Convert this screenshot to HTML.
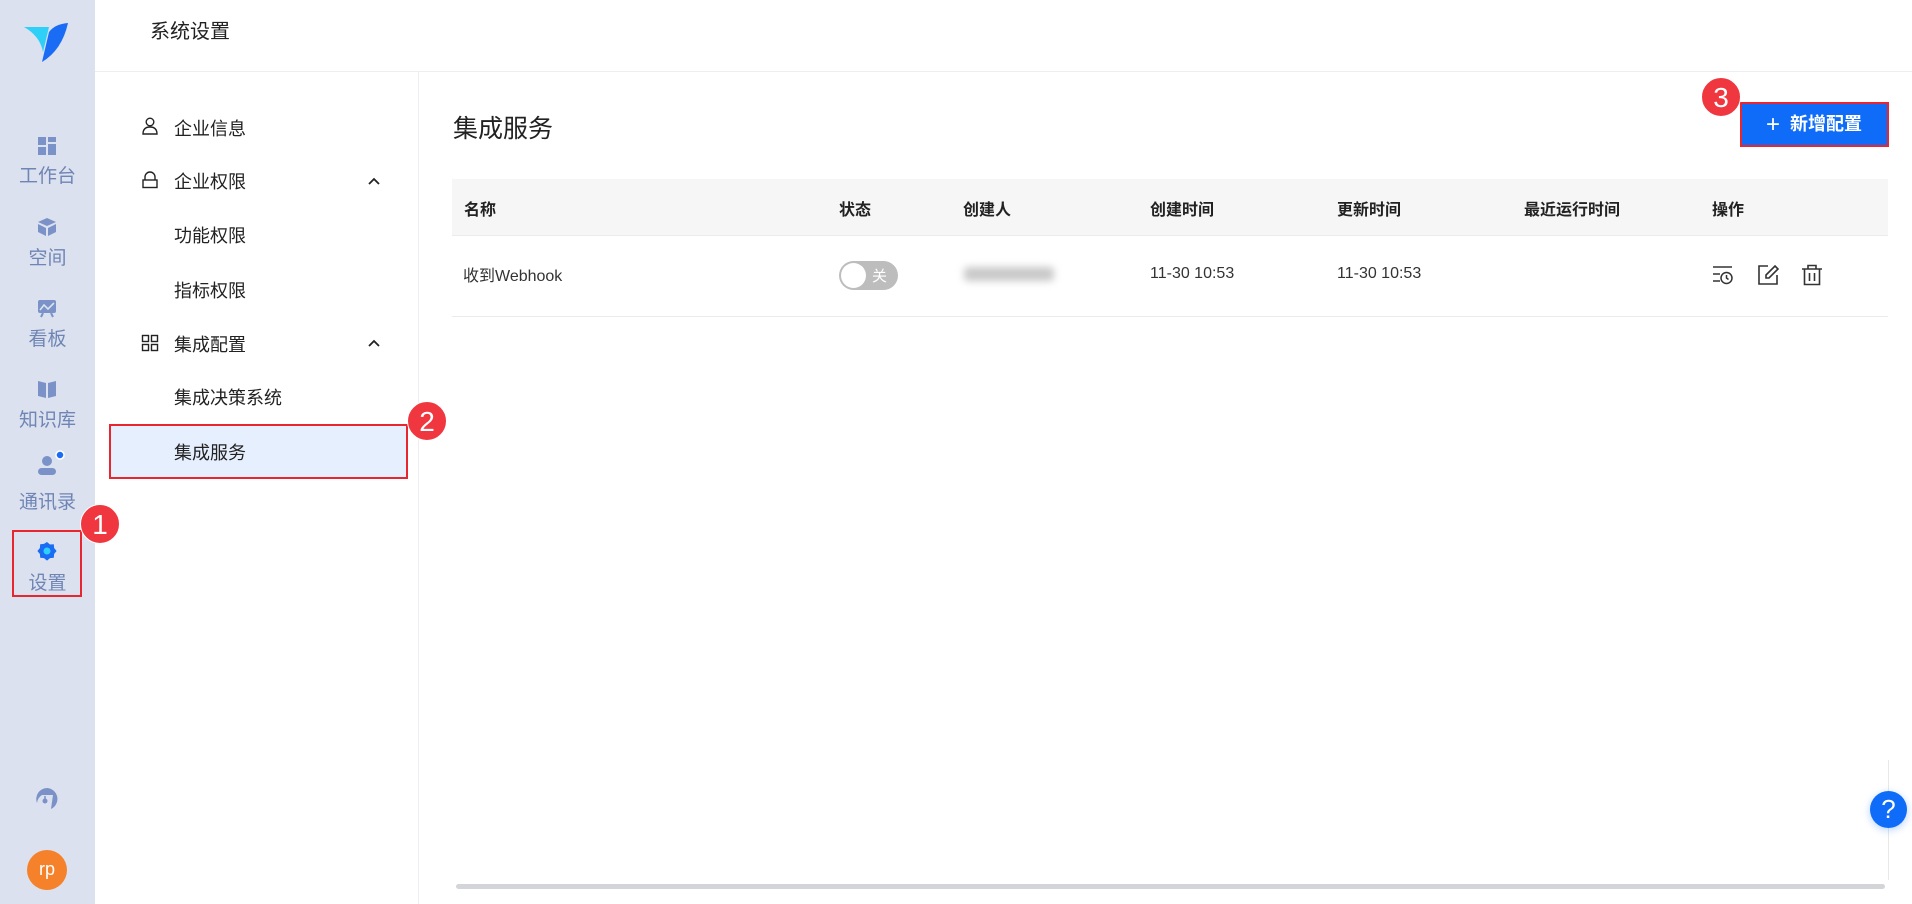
<!DOCTYPE html>
<html><head><meta charset="utf-8"><style>
*{margin:0;padding:0;box-sizing:border-box}
body{width:1912px;height:904px;overflow:hidden;background:#fff;font-family:"Liberation Sans","Noto Sans CJK SC",sans-serif;color:#222;position:relative}
.abs{position:absolute}
.side{left:0;top:0;width:95px;height:904px;background:#dbe1ee}
.si{position:absolute;left:0;width:95px;text-align:center;color:#6f85b5;font-size:19px}
.menu{font-size:18px;color:#222}
.badge{position:absolute;width:40px;height:40px;border-radius:50%;background:#f0373f;color:#fff;font-size:28px;text-align:center;line-height:40px;border:1px solid #fff}
.th{position:absolute;top:196px;font-size:16px;font-weight:bold;color:#222}
.td{position:absolute;top:265px;font-size:16px;color:#333}
</style></head><body>
<div class="abs side"></div>
<svg class="abs" style="left:22px;top:20px" width="50" height="45" viewBox="0 0 50 45">
<path d="M2 7 L27 7 L21 32 Q18 16 2 7Z" fill="#2fd0f8"/>
<path d="M46 3 Q33 4 27 12 L20 42 Q40 30 46 3Z" fill="#1a6cf5"/>
</svg>
<svg class="abs" style="left:37px;top:136px" width="20" height="20"><rect x="1" y="1" width="8" height="8" fill="#7b92c8"/><rect x="11" y="1" width="8" height="5" fill="#7b92c8"/><rect x="1" y="11" width="8" height="8" fill="#7b92c8"/><rect x="11" y="8" width="8" height="11" fill="#7b92c8"/></svg>
<div class="si" style="top:161px">工作台</div>
<svg class="abs" style="left:37px;top:217px" width="20" height="20"><path d="M10 1 L19 5 L10 9 L1 5Z M1 7 L9 11 L9 19 L1 15Z M11 11 L19 7 L19 15 L11 19Z" fill="#7b92c8"/></svg>
<div class="si" style="top:243px">空间</div>
<svg class="abs" style="left:37px;top:298px" width="20" height="20"><rect x="1" y="2" width="18" height="13" rx="2" fill="#7b92c8"/><path d="M3 12 L7 7 L11 11 L17 5" stroke="#dbe1ee" stroke-width="1.6" fill="none"/><path d="M6 15 L4 19 M14 15 L16 19" stroke="#7b92c8" stroke-width="2"/></svg>
<div class="si" style="top:324px">看板</div>
<svg class="abs" style="left:37px;top:379px" width="20" height="20"><path d="M1 2 L9 4 L9 19 L1 17Z M11 4 L19 2 L19 17 L11 19Z" fill="#7b92c8"/></svg>
<div class="si" style="top:405px">知识库</div>
<svg class="abs" style="left:35px;top:450px" width="30" height="26"><circle cx="12" cy="11" r="5" fill="#7b92c8"/><rect x="3" y="18" width="18" height="7" rx="3.5" fill="#7b92c8"/><circle cx="25" cy="5" r="4" fill="#1a6cf5" stroke="#fff" stroke-width="1.5"/></svg>
<div class="si" style="top:487px">通讯录</div>
<svg class="abs" style="left:37px;top:541px" width="20" height="20" viewBox="0 0 20 20"><path d="M10 1 l3 2.5 3.8-.3.3 3.8L19.6 10l-2.5 3 -.3 3.8-3.8.3L10 19.6l-3-2.5-3.8-.3-.3-3.8L.4 10l2.5-3 .3-3.8 3.8-.3Z" fill="#1a6cf5"/><circle cx="10" cy="10" r="3.5" fill="#2fd0f8"/></svg>
<div class="si" style="top:568px;color:#6f85b5">设置</div>
<div class="abs" style="left:12px;top:530px;width:70px;height:67px;border:2px solid #e8262f"></div>
<div class="badge" style="left:80px;top:504px">1</div>
<svg class="abs" style="left:35px;top:787px" width="24" height="24" viewBox="0 0 24 24"><path d="M12 1 A11 11 0 0 1 16 22 L18 8 L7 8 A11 11 0 0 0 2 16 A11 11 0 0 1 12 1Z" fill="#7b92c8"/><circle cx="10" cy="14" r="2.5" fill="#7b92c8"/><path d="M10 9 V14" stroke="#7b92c8" stroke-width="1.5"/></svg>
<div class="abs" style="left:27px;top:850px;width:40px;height:40px;border-radius:50%;background:#f5822a;color:#fff;font-size:18px;text-align:center;line-height:38px">rp</div>
<div class="abs" style="left:150px;top:15px;font-size:20px;color:#222">系统设置</div>
<div class="abs" style="left:95px;top:71px;width:1817px;height:1px;background:#eceef2"></div>
<div class="abs" style="left:418px;top:72px;width:1px;height:832px;background:#eceef2"></div>
<div class="abs" style="left:109px;top:424px;width:299px;height:55px;background:#e6effd;border:2px solid #e8262f"></div>
<div class="badge" style="left:407px;top:401px">2</div>
<svg class="abs" style="left:141px;top:117px" width="18" height="18"><circle cx="9" cy="5" r="3.8" stroke="#222" stroke-width="1.4" fill="none"/><path d="M2 17 Q2 10 9 10 Q16 10 16 17Z" stroke="#222" stroke-width="1.4" fill="none"/></svg>
<div class="abs menu" style="left:174px;top:115px">企业信息</div>
<svg class="abs" style="left:141px;top:171px" width="18" height="18"><path d="M4 9 V6 A5 5 0 0 1 14 6 V9" stroke="#222" stroke-width="1.4" fill="none"/><rect x="2" y="9" width="14" height="7.5" stroke="#222" stroke-width="1.4" fill="none"/></svg>
<div class="abs menu" style="left:174px;top:168px">企业权限</div>
<svg class="abs" style="left:367px;top:176px" width="14" height="10"><path d="M2 8 L7 3 L12 8" stroke="#222" stroke-width="1.8" fill="none"/></svg>
<div class="abs menu" style="left:174px;top:222px">功能权限</div>
<div class="abs menu" style="left:174px;top:277px">指标权限</div>
<svg class="abs" style="left:141px;top:334px" width="18" height="18"><g stroke="#222" stroke-width="1.4" fill="none"><rect x="1.5" y="1.5" width="6" height="6"/><rect x="10.5" y="1.5" width="6" height="6"/><rect x="1.5" y="10.5" width="6" height="6"/><rect x="10.5" y="10.5" width="6" height="6"/></g></svg>
<div class="abs menu" style="left:174px;top:331px">集成配置</div>
<svg class="abs" style="left:367px;top:338px" width="14" height="10"><path d="M2 8 L7 3 L12 8" stroke="#222" stroke-width="1.8" fill="none"/></svg>
<div class="abs menu" style="left:174px;top:384px">集成决策系统</div>
<div class="abs menu" style="left:174px;top:439px">集成服务</div>
<div class="abs" style="left:453px;top:109px;font-size:25px;color:#222">集成服务</div>
<div class="abs" style="left:1740px;top:102px;width:149px;height:45px;background:#0f6cf8;border:2px solid #e8262f;color:#fff;font-size:18px;font-weight:bold;line-height:41px;padding-left:24px"><span style="font-weight:normal;font-size:24px;vertical-align:-2px;margin-right:10px">+</span>新增配置</div>
<div class="badge" style="left:1701px;top:77px">3</div>
<div class="abs" style="left:452px;top:179px;width:1436px;height:57px;background:#f6f6f6;border-bottom:1px solid #ebebeb"></div>
<div class="abs" style="left:452px;top:316px;width:1436px;height:1px;background:#ebebeb"></div>
<div class="th" style="left:464px">名称</div>
<div class="th" style="left:839px">状态</div>
<div class="th" style="left:963px">创建人</div>
<div class="th" style="left:1150px">创建时间</div>
<div class="th" style="left:1337px">更新时间</div>
<div class="th" style="left:1524px">最近运行时间</div>
<div class="th" style="left:1712px">操作</div>
<div class="td" style="left:463px;top:262px">收到Webhook</div>
<div class="abs" style="left:839px;top:261px;width:59px;height:29px;border-radius:15px;background:#bdbdbd"><div style="position:absolute;left:2px;top:2px;width:25px;height:25px;border-radius:50%;background:#fff"></div><span style="position:absolute;left:33px;top:4px;color:#fff;font-size:15px">关</span></div>
<div class="abs" style="left:964px;top:267px;width:90px;height:14px;background:#c8c8c8;filter:blur(4px);border-radius:4px"></div>
<div class="td" style="left:1150px">11-30 10:53</div>
<div class="td" style="left:1337px">11-30 10:53</div>
<svg class="abs" style="left:1712px;top:264px" width="22" height="22" viewBox="0 0 22 22"><g stroke="#333" stroke-width="1.5" fill="none"><path d="M1 3 H20 M1 10 H8 M1 17 H8"/><circle cx="14.5" cy="14" r="5.5"/><path d="M14.5 11 V14 L16.5 15.5"/></g></svg>
<svg class="abs" style="left:1757px;top:264px" width="22" height="22" viewBox="0 0 22 22"><g stroke="#333" stroke-width="1.6" fill="none"><path d="M11 2 H2 V20 H20 V11"/><path d="M18 2 L21 5 L12 14 H9 V11Z"/></g></svg>
<svg class="abs" style="left:1801px;top:264px" width="22" height="22" viewBox="0 0 22 22"><g stroke="#333" stroke-width="1.6" fill="none"><path d="M1 5 H21 M7 5 V1.5 H15 V5 M3.5 5 V20.5 H18.5 V5 M8.5 9 V17 M13.5 9 V17"/></g></svg>
<div class="abs" style="left:1888px;top:760px;width:1px;height:120px;background:#e8e8e8"></div>
<div class="abs" style="left:456px;top:884px;width:1429px;height:5px;border-radius:3px;background:#d3d5d8"></div>
<div class="abs" style="left:1870px;top:791px;width:37px;height:37px;border-radius:50%;background:#0f6cf8;color:#fff;font-size:26px;text-align:center;line-height:37px;box-shadow:0 2px 8px rgba(15,108,248,.3)">?</div>
</body></html>
